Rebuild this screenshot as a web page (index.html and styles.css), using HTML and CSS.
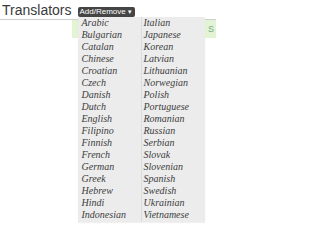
FILE: index.html
```html
<!DOCTYPE html>
<html>
<head>
<meta charset="utf-8">
<link rel="stylesheet" href="styles.css">
</head>
<body>
<div class="header">
  <h1 class="title">Translators</h1>
  <div class="dropdown">
    <button class="btn">Add/Remove<span class="caret">&#9660;</span></button>
    <div class="menu">
      <ul class="col">
        <li>Arabic</li><li>Bulgarian</li><li>Catalan</li><li>Chinese</li><li>Croatian</li><li>Czech</li><li>Danish</li><li>Dutch</li><li>English</li><li>Filipino</li><li>Finnish</li><li>French</li><li>German</li><li>Greek</li><li>Hebrew</li><li>Hindi</li><li>Indonesian</li>
      </ul>
      <ul class="col col-right">
        <li>Italian</li><li>Japanese</li><li>Korean</li><li>Latvian</li><li>Lithuanian</li><li>Norwegian</li><li>Polish</li><li>Portuguese</li><li>Romanian</li><li>Russian</li><li>Serbian</li><li>Slovak</li><li>Slovenian</li><li>Spanish</li><li>Swedish</li><li>Ukrainian</li><li>Vietnamese</li>
      </ul>
    </div>
  </div>
</div>
<div class="notice"><span class="notice-text">S</span></div>
</body>
</html>
```
FILE: styles.css
```css
html, body {
  margin: 0;
  padding: 0;
  background: #fff;
}
body {
  width: 216px;
  height: 234px;
  overflow: hidden;
  font-family: "Liberation Sans", Arial, sans-serif;
}
.header {
  display: flex;
  align-items: flex-end;
  height: 19px;
  border-bottom: 1px solid #cfcfcf;
}
.title {
  margin: 0 0 0 2px;
  font-size: 14px;
  font-weight: normal;
  line-height: 17px;
  color: #3a3a3a;
}
.dropdown {
  position: relative;
  margin-left: 6px;
  margin-bottom: 2px;
}
.btn {
  display: flex;
  align-items: center;
  height: 10px;
  padding: 0 2px;
  border: 0;
  border-radius: 2px;
  background: #454545;
  color: #fff;
  font-family: "Liberation Sans", Arial, sans-serif;
  font-size: 8px;
  line-height: 10px;
}
.caret {
  font-size: 6px;
  margin-left: 1px;
}
.menu {
  position: absolute;
  top: 10px;
  left: 0;
  width: 127px;
  height: 205px;
  display: flex;
  background: #ececec;
  box-shadow: 0 1px 1px rgba(0, 0, 0, 0.06);
  z-index: 2;
}
.col {
  list-style: none;
  margin: 0;
  padding: 0 0 0 4px;
  width: 59px;
  font-family: "Liberation Serif", Georgia, serif;
  font-style: italic;
  font-size: 10px;
  line-height: 12px;
  color: #3c3c3c;
}
.col-right {
  border-left: 1px solid #dcdcdc;
  padding-left: 2px;
  width: 61px;
}
.notice {
  display: flex;
  justify-content: flex-end;
  align-items: center;
  margin-left: 72px;
  height: 18px;
  background: #e2f4d4;
}
.notice-text {
  font-size: 9px;
  color: #7aa88a;
  width: 8px;
}
```
